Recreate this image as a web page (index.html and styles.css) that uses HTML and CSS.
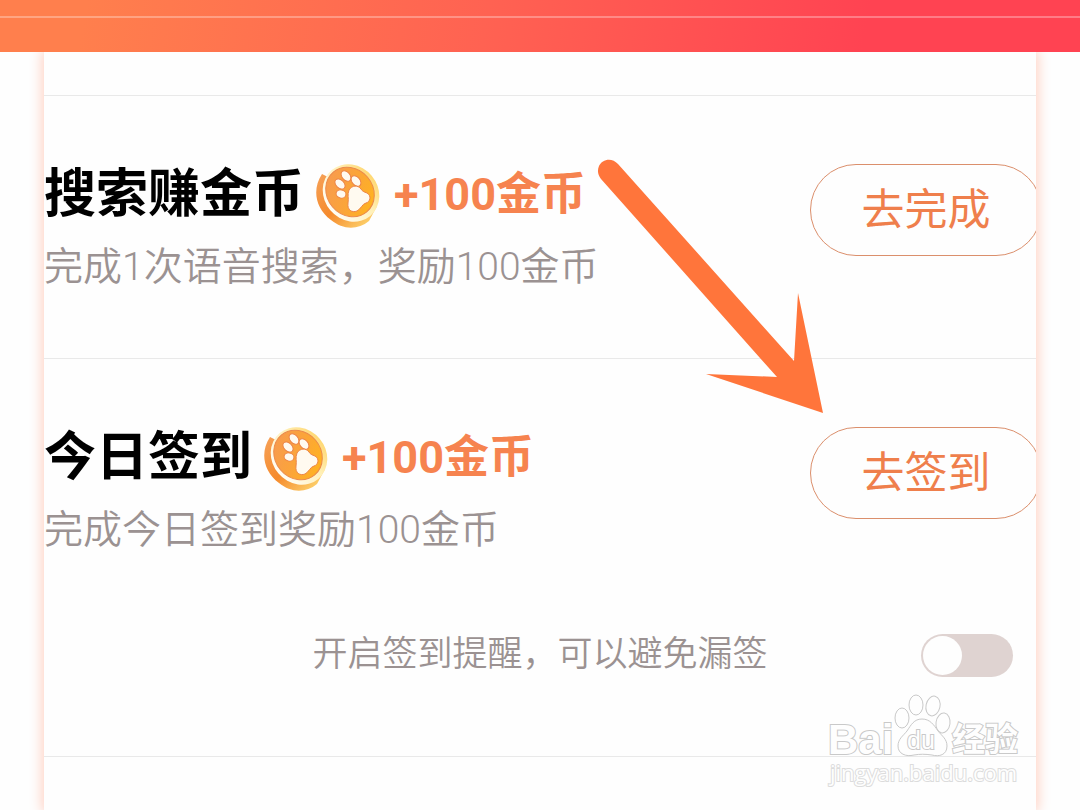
FILE: index.html
```
<!DOCTYPE html>
<html lang="zh-CN">
<head>
    <meta charset="UTF-8">
    <meta name="viewport" content="width=device-width, initial-scale=1.0">
    <title>任务中心</title>
    <link rel="stylesheet" href="styles.css">
</head>
<body>
    <!-- coin icon, used by each task -->
    <svg class="sprite" aria-hidden="true">
        <defs>
            <linearGradient id="coin_edge" x1="0" y1="0" x2="1" y2="1">
                <stop offset="0" stop-color="#f6a35c"/>
                <stop offset="0.5" stop-color="#f58a2c"/>
                <stop offset="1" stop-color="#ffe27a"/>
            </linearGradient>
            <linearGradient id="coin_rim" x1="0" y1="0" x2="1" y2="0">
                <stop offset="0" stop-color="#fffdf5"/>
                <stop offset="0.6" stop-color="#fff0b8"/>
                <stop offset="1" stop-color="#ffd873"/>
            </linearGradient>
            <linearGradient id="coin_face" x1="0.2" y1="0" x2="0.7" y2="1">
                <stop offset="0" stop-color="#f79a50"/>
                <stop offset="0.5" stop-color="#fba43a"/>
                <stop offset="1" stop-color="#ffb31f"/>
            </linearGradient>
        </defs>
        <symbol id="coin" viewBox="1 -2 66 66">
            <path d="M7 10C-3 25 0 44 16 56c12 10 27 10 38 1L62 42 20 6l-7 7z" fill="url(#coin_edge)"/>
            <ellipse cx="36" cy="29" rx="27" ry="30" transform="rotate(-40 36 29)" fill="url(#coin_rim)"/>
            <ellipse cx="35" cy="28" rx="23" ry="26" transform="rotate(-40 35 28)" fill="url(#coin_face)" stroke="#ea8a4c" stroke-width="1"/>
            <g fill="#fffaf0" stroke="#ec8548" stroke-width="1">
                <ellipse cx="26" cy="30" rx="5" ry="4" transform="rotate(15 26 30)"/>
                <ellipse cx="25" cy="20" rx="4" ry="6" transform="rotate(-45 25 20)"/>
                <ellipse cx="31" cy="12" rx="4" ry="6" transform="rotate(-40 31 12)"/>
                <ellipse cx="41" cy="17" rx="4" ry="6" transform="rotate(-40 41 17)"/>
                <path d="M34 26c3-5 9-5 12-1 1 2 3 3 6 4 5 3 3 9-1 10-4 1-5 6-9 8-5 2-10-1-9-8 1-5-1-8 1-13z"/>
            </g>
        </symbol>
    </svg>

    <header class="top-bar"></header>

    <main class="panel">
        <section class="task">
            <div class="task-row">
                <div class="task-info">
                    <h2 class="task-title">搜索赚金币
                        <svg class="coin" aria-hidden="true"><use href="#coin"/></svg>
                        <span class="reward">+100金币</span>
                    </h2>
                    <p class="task-desc">完成1次语音搜索，奖励100金币</p>
                </div>
                <button class="task-btn" type="button">去完成</button>
            </div>
        </section>

        <section class="task">
            <div class="task-row">
                <div class="task-info">
                    <h2 class="task-title">今日签到
                        <svg class="coin" aria-hidden="true"><use href="#coin"/></svg>
                        <span class="reward">+100金币</span>
                    </h2>
                    <p class="task-desc">完成今日签到奖励100金币</p>
                </div>
                <button class="task-btn" type="button">去签到</button>
            </div>
            <div class="remind">
                <label class="remind-label" for="remind_switch">开启签到提醒，可以避免漏签</label>
                <input class="switch" type="checkbox" id="remind_switch">
            </div>
        </section>

        <section class="task"></section>
    </main>

    <!-- pointer to the sign-in button -->
    <svg class="arrow" viewBox="0 0 230 258" aria-hidden="true">
        <path d="M18 5C12-2 2 0-1 7c-2 5-1 9 2 13l176 198-71-3 117 39-25-120-4 68z" fill="#ff753b"/>
    </svg>

    <!-- watermark -->
    <svg class="watermark" viewBox="0 0 210 100" role="img" aria-label="Baidu经验">
        <g class="mark-shape">
            <ellipse cx="82" cy="28" rx="7" ry="10"/>
            <ellipse cx="96" cy="15" rx="7" ry="10"/>
            <ellipse cx="113" cy="16" rx="7" ry="10" transform="rotate(12 113 16)"/>
            <ellipse cx="123" cy="33" rx="7" ry="10" transform="rotate(8 123 33)"/>
            <path d="M102 29c8 0 12 6 16 12 4 5 9 8 9 15 0 9-8 11-15 9-7-1-12-1-18 0-8 2-16-1-16-9 0-7 5-10 9-15 4-6 7-12 15-12z"/>
        </g>
        <text class="mark-text mark-latin" x="8" y="64">Bai</text>
        <text class="mark-text mark-du" x="87" y="59">du</text>
        <text class="mark-text mark-cjk" x="132" y="61">经验</text>
        <text class="mark-text mark-url" x="10" y="91">jingyan.baidu.com</text>
    </svg>
</body>
</html>
```
FILE: styles.css
```
* {
    box-sizing: border-box;
}

body {
    position: relative;
    display: flex;
    flex-direction: column;
    min-height: 100vh;
    margin: 0;
    overflow-x: hidden;
    background-color: #fefefe;
    font-family: Roboto, "Noto Sans CJK SC", sans-serif;
}

.sprite {
    position: absolute;
    width: 0;
    height: 0;
}

/* Gradient bar on top */
.top-bar {
    z-index: 1;
    height: 52px;
    padding-top: 16px;
    background: linear-gradient(100deg, #ff7f4d 8%, #ff6252 45%, #ff4352 80%);
}

.top-bar::before {
    content: "";
    display: block;
    height: 2px;
    background-color: rgba(255, 255, 255, 0.3);
}

/* White card with the task list */
.panel {
    flex: 1;
    margin: 0 44px;
    padding-top: 43px;
    background-color: #fefefe;
    box-shadow: 0 0 12px 2px #ffd0c2;
    overflow: hidden;
}

.task {
    padding: 68px 0 66px;
    border-top: 1px solid #e9e9e9;
}

.task:last-child {
    padding: 0;
}

.task-row {
    display: flex;
    justify-content: space-between;
    align-items: flex-start;
}

.task-title {
    display: flex;
    align-items: center;
    margin: -2px 0 0;
    color: #000;
    font-size: 52px;
    font-weight: 700;
    line-height: 60px;
    white-space: nowrap;
}

.coin {
    width: 66px;
    height: 66px;
    margin: 0 12px;
}

.reward {
    color: #f6834f;
    font-size: 45px;
}

.task-desc {
    margin: 14px 0 0;
    color: #9b9292;
    font-size: 39px;
    font-weight: 350;
    line-height: 50px;
}

.task-btn {
    flex: none;
    width: 232px;
    height: 92px;
    margin-right: -6px;
    padding: 0 0 8px;
    border: 1px solid #db8f6c;
    border-radius: 46px;
    background: none;
    color: #ef7f4c;
    font-family: inherit;
    font-size: 43px;
}

/* Sign-in reminder */
.remind {
    display: grid;
    grid-template-columns: 1fr auto 1fr;
    align-items: center;
    margin: 75px 0 10px;
    padding: 0 23px;
}

.remind-label {
    grid-column: 2;
    color: #9b9292;
    font-size: 35px;
    font-weight: 350;
    line-height: 50px;
}

.switch {
    appearance: none;
    justify-self: end;
    width: 92px;
    height: 43px;
    margin: 0;
    padding: 2px;
    border-radius: 22px;
    background-color: #dfd3d1;
}

.switch::before {
    content: "";
    display: block;
    width: 39px;
    height: 39px;
    border-radius: 50%;
    background-color: #fefefe;
}

.switch:checked {
    background-color: #ff753b;
}

.switch:checked::before {
    margin-left: auto;
}

/* Overlays */
.arrow {
    position: absolute;
    z-index: 2;
    top: 159px;
    left: 600px;
    width: 230px;
    height: 258px;
    overflow: visible;
    pointer-events: none;
}

.watermark {
    position: absolute;
    z-index: 2;
    top: 690px;
    right: 50px;
    width: 210px;
    height: 100px;
    pointer-events: none;
}

.mark-shape,
.mark-text {
    fill: #fefefe;
    stroke: #c9c9c9;
    stroke-width: 1px;
}

.mark-text {
    paint-order: stroke;
    stroke-width: 2px;
    font-family: "Liberation Sans", sans-serif;
    font-weight: 700;
}

.mark-latin {
    font-size: 42px;
}

.mark-du {
    font-size: 25px;
    font-weight: 400;
}

.mark-cjk {
    font-family: "Noto Sans CJK SC", sans-serif;
    font-size: 33px;
}

.mark-url {
    stroke: #dcdcdc;
    font-family: "Open Sans", sans-serif;
    font-size: 22px;
    font-weight: 400;
}
```
